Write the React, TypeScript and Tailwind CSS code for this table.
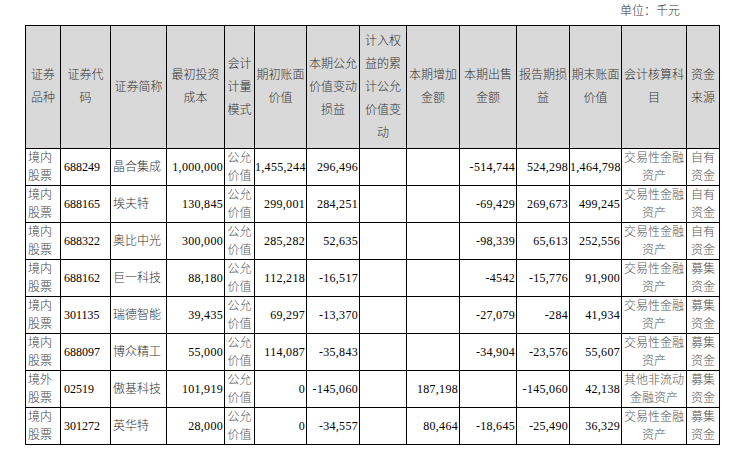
const cols = [35, 50, 56, 58, 30, 52, 53, 47, 53, 57, 53, 52, 65, 33];

const headers: string[][] = [
  ["证券", "品种"],
  ["证券代", "码"],
  ["证券简称"],
  ["最初投资", "成本"],
  ["会计", "计量", "模式"],
  ["期初账面", "价值"],
  ["本期公允", "价值变动", "损益"],
  ["计入权", "益的累", "计公允", "价值变", "动"],
  ["本期增加", "金额"],
  ["本期出售", "金额"],
  ["报告期损", "益"],
  ["期末账面", "价值"],
  ["会计核算科", "目"],
  ["资金", "来源"],
];

type Row = {
  kind: string[];
  code: string;
  name: string;
  cost: string;
  open: string;
  change: string;
  equity: string;
  add: string;
  sell: string;
  gain: string;
  close: string;
  subject: string[];
  source: string[];
};

const trading = ["交易性金融", "资产"];
const own = ["自有", "资金"];
const raised = ["募集", "资金"];
const domestic = ["境内", "股票"];

const rows: Row[] = [
  { kind: domestic, code: "688249", name: "晶合集成", cost: "1,000,000", open: "1,455,244", change: "296,496", equity: "", add: "", sell: "-514,744", gain: "524,298", close: "1,464,798", subject: trading, source: own },
  { kind: domestic, code: "688165", name: "埃夫特", cost: "130,845", open: "299,001", change: "284,251", equity: "", add: "", sell: "-69,429", gain: "269,673", close: "499,245", subject: trading, source: own },
  { kind: domestic, code: "688322", name: "奥比中光", cost: "300,000", open: "285,282", change: "52,635", equity: "", add: "", sell: "-98,339", gain: "65,613", close: "252,556", subject: trading, source: own },
  { kind: domestic, code: "688162", name: "巨一科技", cost: "88,180", open: "112,218", change: "-16,517", equity: "", add: "", sell: "-4542", gain: "-15,776", close: "91,900", subject: trading, source: raised },
  { kind: domestic, code: "301135", name: "瑞德智能", cost: "39,435", open: "69,297", change: "-13,370", equity: "", add: "", sell: "-27,079", gain: "-284", close: "41,934", subject: trading, source: raised },
  { kind: domestic, code: "688097", name: "博众精工", cost: "55,000", open: "114,087", change: "-35,843", equity: "", add: "", sell: "-34,904", gain: "-23,576", close: "55,607", subject: trading, source: raised },
  { kind: ["境外", "股票"], code: "02519", name: "傲基科技", cost: "101,919", open: "0", change: "-145,060", equity: "", add: "187,198", sell: "", gain: "-145,060", close: "42,138", subject: ["其他非流动", "金融资产"], source: raised },
  { kind: domestic, code: "301272", name: "英华特", cost: "28,000", open: "0", change: "-34,557", equity: "", add: "80,464", sell: "-18,645", gain: "-25,490", close: "36,329", subject: trading, source: raised },
];

const Lines = ({ lines }: { lines: string[] }) => (
  <>
    {lines.map((l, i) => (
      <div key={i}>{l}</div>
    ))}
  </>
);

const Num = ({ v }: { v: string }) => (
  <td className="border border-black pr-[1px] text-right align-middle whitespace-nowrap tracking-[0.3px] text-black">
    {v}
  </td>
);

export default function App() {
  return (
    <div
      className="w-[753px] h-[459px] bg-white text-[12px] text-[#222] font-light"
      style={{ fontFamily: '"Liberation Serif", "Noto Sans CJK SC", serif' }}
    >
      <div className="flex justify-end h-[25px] pr-[73px] pt-[3px] leading-[16px] text-[#333]">
        单位：千元
      </div>
      <div className="pl-[25px]">
        <table className="table-fixed border-collapse w-[695px]">
          <colgroup>
            {cols.map((w, i) => (
              <col key={i} style={{ width: w }} />
            ))}
          </colgroup>
          <thead>
            <tr className="h-[123px] bg-[#d9d9d9]">
              {headers.map((h, i) => (
                <th key={i} className="border border-black font-light text-center align-middle leading-[23px] text-[#333] px-0">
                  <Lines lines={h} />
                </th>
              ))}
            </tr>
          </thead>
          <tbody>
            {rows.map((r) => (
              <tr key={r.code} className="h-[37px]">
                <td className="border border-black pl-[2px] text-left align-middle leading-[18px] text-[#444]">
                  <Lines lines={r.kind} />
                </td>
                <td className="border border-black pl-[3px] text-left align-middle text-black">{r.code}</td>
                <td className="border border-black pl-[2px] text-left align-middle text-[#333] whitespace-nowrap">{r.name}</td>
                <Num v={r.cost} />
                <td className="border border-black text-center align-middle leading-[18px] text-[#555]">
                  <Lines lines={["公允", "价值"]} />
                </td>
                <Num v={r.open} />
                <Num v={r.change} />
                <Num v={r.equity} />
                <Num v={r.add} />
                <Num v={r.sell} />
                <Num v={r.gain} />
                <Num v={r.close} />
                <td className="border border-black text-center align-middle leading-[18px] text-[#555] whitespace-nowrap">
                  <Lines lines={r.subject} />
                </td>
                <td className="border border-black text-center align-middle leading-[18px] text-[#555]">
                  <Lines lines={r.source} />
                </td>
              </tr>
            ))}
          </tbody>
        </table>
      </div>
    </div>
  );
}
